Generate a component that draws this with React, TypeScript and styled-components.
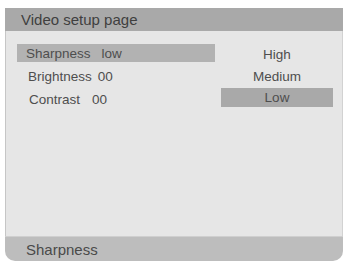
import styled, { createGlobalStyle } from 'styled-components';

const GlobalStyle = createGlobalStyle`
  html, body {
    margin: 0;
    padding: 0;
    background: #ffffff;
    font-family: "Liberation Sans", Arial, sans-serif;
  }
`;

const Page = styled.div`
  width: 346px;
  height: 262px;
  padding: 8px 3px 1px 5px;
  box-sizing: border-box;
  display: flex;
`;

const Panel = styled.div`
  flex: 1;
  display: flex;
  flex-direction: column;
  border-radius: 0 0 10px 10px;
  overflow: hidden;
`;

const Header = styled.div`
  height: 23px;
  background: #a9a9a9;
  color: #3f3f3f;
  font-size: 15px;
  display: flex;
  align-items: center;
  padding-left: 16px;
`;

const Body = styled.div`
  flex: 1;
  background: #e6e6e6;
  border-left: 1px solid #c6c6c6;
  border-right: 1px solid #d2d2d2;
  padding: 13px 9px 0 11px;
  display: flex;
  gap: 6px;
`;

const LeftList = styled.div`
  width: 198px;
  display: flex;
  flex-direction: column;
`;

const Row = styled.div<{ $active?: boolean; $indent: number; $mt: number }>`
  height: 18px;
  margin-top: ${p => p.$mt}px;
  background: ${p => (p.$active ? '#b2b2b2' : 'transparent')};
  padding-left: ${p => p.$indent}px;
  display: flex;
  align-items: center;
  font-size: 13.5px;
  color: #4e4e4e;
`;

const Value = styled.span<{ $gap: number }>`
  margin-left: ${p => p.$gap}px;
`;

const Options = styled.div`
  width: 112px;
  display: flex;
  flex-direction: column;
`;

const Option = styled.div<{ $active?: boolean; $mt: number; $h: number }>`
  height: ${p => p.$h}px;
  margin-top: ${p => p.$mt}px;
  background: ${p => (p.$active ? '#a9a9a9' : 'transparent')};
  display: flex;
  align-items: center;
  justify-content: center;
  font-size: 13.5px;
  color: #4e4e4e;
`;

const Footer = styled.div`
  height: 24px;
  background: #bdbdbd;
  border-top: 1px solid #cfcfcf;
  color: #4a4a4a;
  font-size: 15px;
  display: flex;
  align-items: center;
  padding-left: 21px;
`;

const rows = [
  { label: 'Sharpness', value: 'low', active: true, indent: 9, gap: 11, mt: 0 },
  { label: 'Brightness', value: '00', indent: 11, gap: 6, mt: 5 },
  { label: 'Contrast', value: '00', indent: 12, gap: 12, mt: 5 },
];

const options = [
  { label: 'High', mt: 1, h: 18 },
  { label: 'Medium', mt: 4, h: 18 },
  { label: 'Low', mt: 3, h: 19, active: true },
];

const App = () => (
  <>
    <GlobalStyle />
    <Page>
      <Panel>
        <Header>Video setup page</Header>
        <Body>
          <LeftList>
            {rows.map(r => (
              <Row key={r.label} $active={r.active} $indent={r.indent} $mt={r.mt}>
                <span>{r.label}</span>
                <Value $gap={r.gap}>{r.value}</Value>
              </Row>
            ))}
          </LeftList>
          <Options>
            {options.map(o => (
              <Option key={o.label} $active={o.active} $mt={o.mt} $h={o.h}>
                {o.label}
              </Option>
            ))}
          </Options>
        </Body>
        <Footer>Sharpness</Footer>
      </Panel>
    </Page>
  </>
);

export default App;
